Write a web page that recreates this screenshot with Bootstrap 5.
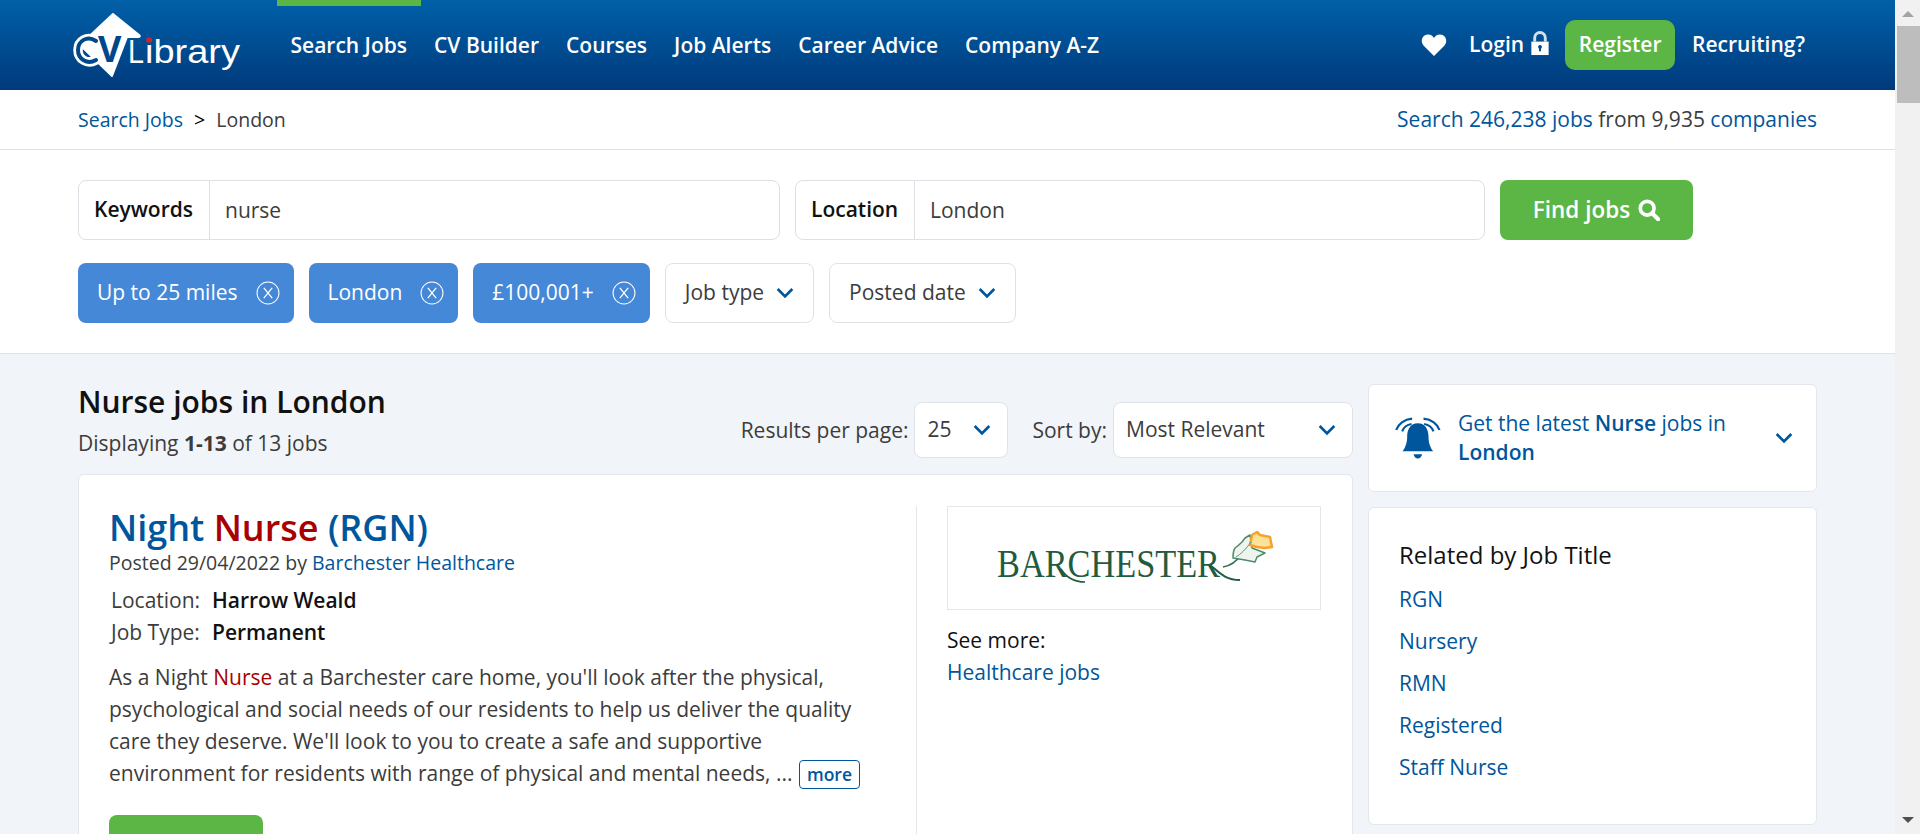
<!DOCTYPE html>
<html lang="en">
<head>
    <meta charset="UTF-8">
    <title>Nurse jobs in London</title>
    <link rel="stylesheet" href="https://cdn.jsdelivr.net/npm/bootstrap@5.3.2/dist/css/bootstrap.min.css">
    <style>
        html, body { height: 834px; overflow: hidden; }
        body { font-family: "Open Sans", sans-serif; font-size: 21px; color: #3c3c3c; background: #f1f4f8; }
        a { color: #00569c; text-decoration: none; }
        .page-wrap { width: 1895px; }
        .side-pad { padding-left: 78px; padding-right: 78px; }
        .gap-15 { gap: 15px; }

        .top-bar { height: 90px; background: linear-gradient(#0060a8, #003a7c); }
        .logo-link { width: 204px; margin-left: -5px; margin-top: 13px; }
        .top-nav a { color: #fff; font-weight: 600; font-size: 21px; padding: 0 13.5px 5px; height: 90px; display: flex; align-items: center; border-top: 6px solid transparent; }
        .top-nav a.active-item { border-top-color: #5cb646; }
        .top-right { color: #fff; font-weight: 600; font-size: 21px; padding-right: 12px; }
        .top-right a { color: #fff; }
        .heart-icon { margin-right: 22px; }
        .lock-icon { margin-left: 6px; margin-bottom: 4px; }
        .register-btn { width: 110px; height: 50px; background: #5cb646; border-radius: 10px; font-size: 21px; font-weight: 600; color: #fff; padding: 0; border: 0; margin-left: 15px; margin-right: 17px; }

        .crumb-bar { height: 60px; background: #fff; border-bottom: 1px solid #dee0e2; }
        .crumb-left { font-size: 19.500px; }
        .crumb-sep { margin: 0 6px; color: #000; }
        .search-area { height: 204px; padding-top: 30px; background: #fff; border-bottom: 1px solid #dee0e2; }
        .kw-group { width: 702px; }
        .loc-group { width: 690px; }
        .kw-group .input-group-text, .loc-group .input-group-text { background: #fff; font-weight: 600; color: #111; font-size: 21px; padding: 0 15px; border-color: #dcdfe3; border-radius: 8px 0 0 8px; }
        .kw-group .input-group-text { width: 132px; }
        .loc-group .input-group-text { width: 120px; }
        .kw-group .form-control, .loc-group .form-control { height: 60px; font-size: 21px; color: #3c3c3c; padding-left: 15px; border-color: #dcdfe3; border-radius: 0 8px 8px 0; }
        .find-btn { width: 193px; height: 60px; background: #5cb646; color: #fff; border: 0; border-radius: 8px; font-size: 22.500px; font-weight: 600; }
        .chip-row { margin-top: 23px; }
        .chip-on, .chip-off { height: 60px; border-radius: 8px; font-size: 21px; padding: 0 19px; display: flex; align-items: center; }
        .chip-on { background: #4688d8; color: #fff; border: 0; padding-right: 14px; }
        .chip-on svg { margin-left: 18px; }
        .chip-off { background: #fff; color: #3c3c3c; border: 1px solid #dfe2e6; }
        .chev-gap { margin-left: 12px; }

        .main-col { width: 1275px; }
        .side-col { width: 450px; padding-top: 30px; }
        .list-head { height: 120px; padding-top: 28px; }
        .list-title { font-size: 30px; font-weight: 600; color: #111; line-height: 40px; margin: 0; }
        .list-count { line-height: 26px; margin-top: 8px; }
        .select-row { padding-top: 20px; }
        .select-label { line-height: 56px; margin-right: 6px; }
        .plain-select { height: 56px; font-size: 21px; color: #3c3c3c; border-color: #dfe2e6; border-radius: 8px; padding: 0 12px; background-size: 18px 12px; background-position: right 16px center; background-image: url("data:image/svg+xml,%3csvg xmlns='http://www.w3.org/2000/svg' viewBox='0 0 16 10'%3e%3cpath fill='none' stroke='%2300569c' stroke-width='2.4' d='M1.5 1.5 8 8l6.500-6.500'/%3e%3c/svg%3e"); }
        .select-num { width: 94px; }
        .select-sort { width: 240px; }

        .job-panel { background: #fff; border: 1px solid #e3e6ea; border-radius: 6px; padding: 31px 31px 31px 30px; height: 500px; }
        .job-body { width: 807px; padding-right: 30px; }
        .job-title { font-size: 36px; line-height: 44px; font-weight: 600; margin: 0; color: #00569c; }
        .hit-word { color: #a80000; }
        .job-meta { line-height: 26px; font-size: 19.500px; }
        .job-facts { margin-top: 8px; line-height: 32px; }
        .job-facts span { display: inline-block; padding-left: 2px; width: 103px; }
        .job-facts b { font-weight: 600; color: #111; }
        .job-text { line-height: 32px; margin: 13px 0 0; }
        .more-tag { font-size: 17.500px; font-weight: 600; border: 1px solid #00569c; border-radius: 4px; padding: 0 7px; display: inline-block; line-height: 27px; margin-left: 1px; }
        .view-btn { display: block; width: 154px; height: 60px; margin-top: 26px; background: #5cb646; border: 0; border-radius: 8px; }
        .job-side { width: 405px; border-left: 1px solid #e3e6ea; padding-left: 30px; height: 440px; }
        .logo-box { width: 374px; height: 104px; border: 1px solid #e3e6ea; }
        .see-more { margin-top: 14px; line-height: 32px; color: #111; }

        .alert-panel { height: 108px; background: #fff; border: 1px solid #e3e6ea; border-radius: 6px; padding-left: 23px; padding-right: 23px; color: #00569c; line-height: 29px; }
        .alert-panel b { font-weight: 600; }
        .bell-icon { margin-right: 14px; }
        .related-panel { height: 318px; margin-top: 15px; background: #fff; border: 1px solid #e3e6ea; border-radius: 6px; padding: 31px 31px 31px 30px; }
        .related-title { font-size: 24px; font-weight: 400; color: #111; line-height: 32px; margin: 0 0 7px; }
        .related-panel a { display: block; line-height: 42px; }

        .fake-scroll { position: fixed; top: 0; right: 0; bottom: 0; width: 25px; background: #f1f1f1; }
        .fake-thumb { position: absolute; top: 26px; left: 2px; right: 0; height: 77px; background: #bdbdbd; }
        .arrow-up, .arrow-down { position: absolute; left: 7px; width: 0; height: 0; border-left: 6px solid transparent; border-right: 6px solid transparent; }
        .arrow-up { top: 11px; border-bottom: 6px solid #a3a3a3; }
        .arrow-down { bottom: 11px; border-top: 6px solid #505050; }
    </style>
</head>
<body>

    <div class="page-wrap">

        <header class="top-bar side-pad d-flex justify-content-between">
            <div class="d-flex">
                <a href="#" class="logo-link d-block">
                    <svg width="172" height="66" viewBox="0 0 172 66">
                        <path d="M40 1 66 22Q68 24 65 24H54L39 63 7 32Z" fill="#fff" stroke="#fff" stroke-width="2" stroke-linejoin="round"/>
                        <path d="M23 28C14 22 5 28 5 37s9 15 18 10" fill="none" stroke="#fff" stroke-width="9.500" stroke-linecap="round"/>
                        <path d="M23 28C14 22 5 28 5 37s9 15 18 10" fill="none" stroke="#00478a" stroke-width="4" stroke-linecap="round"/>
                        <text x="25" y="49" font-family="'Open Sans', sans-serif" font-weight="700" font-size="36" fill="#00478a">V</text>
                        <text x="55" y="50" font-family="'Liberation Sans', sans-serif" font-size="33" fill="#fff" textLength="16" lengthAdjust="spacingAndGlyphs">L</text>
                        <text x="72" y="50" font-family="'Liberation Sans', sans-serif" font-size="33" fill="#fff" textLength="95" lengthAdjust="spacingAndGlyphs">ibrary</text>
                        <circle cx="76" cy="27" r="2.800" fill="#d2232a"/>
                    </svg>
                </a>
                <nav class="top-nav d-flex">
                    <a href="#" class="active-item">Search Jobs</a>
                    <a href="#">CV Builder</a>
                    <a href="#">Courses</a>
                    <a href="#">Job Alerts</a>
                    <a href="#">Career Advice</a>
                    <a href="#">Company A-Z</a>
                </nav>
            </div>
            <div class="top-right d-flex align-items-center">
                <svg width="26" height="24" viewBox="0 0 26 24" class="heart-icon"><path d="M13 23 2.500 12.500C-1 8.500 1 1.500 7 1.500c3 0 5 1.800 6 3.500 1-1.700 3-3.500 6-3.500 6 0 8 7 4.500 11Z" fill="#fff"/></svg>
                <a href="#">Login</a>
                <svg width="20" height="25" viewBox="0 0 20 26" class="lock-icon"><path d="M4.500 11V7a5.500 5.500 0 0 1 11 0v4" fill="none" stroke="#d5e0ec" stroke-width="3"/><path d="M1 11h18v14H1Z" fill="#fff"/><circle cx="10" cy="16.500" r="2" fill="#00478a"/><path d="M9 17h2v4H9Z" fill="#00478a"/></svg>
                <button class="register-btn btn">Register</button>
                <a href="#">Recruiting?</a>
            </div>
        </header>

        <div class="crumb-bar side-pad d-flex justify-content-between align-items-center">
            <div class="crumb-left"><a href="#">Search Jobs</a> <span class="crumb-sep">&gt;</span> London</div>
            <div><a href="#">Search 246,238 jobs</a> from 9,935 <a href="#">companies</a></div>
        </div>

        <section class="search-area side-pad">
            <form class="d-flex gap-15">
                <div class="input-group kw-group">
                    <span class="input-group-text">Keywords</span>
                    <input type="text" class="form-control" value="nurse" aria-label="Keywords">
                </div>
                <div class="input-group loc-group">
                    <span class="input-group-text">Location</span>
                    <input type="text" class="form-control" value="London" aria-label="Location">
                </div>
                <button type="button" class="find-btn btn d-flex align-items-center justify-content-center gap-2">Find jobs
                    <svg width="22" height="22" viewBox="0 0 24 24"><circle cx="10" cy="10" r="7.500" fill="none" stroke="#fff" stroke-width="4"/><path d="m15.500 15.500 6.500 6.500" stroke="#fff" stroke-width="4.500" stroke-linecap="round"/></svg>
                </button>
            </form>
            <div class="chip-row d-flex gap-15">
                <button type="button" class="chip-on">Up to 25 miles
                    <svg width="24" height="24" viewBox="0 0 23 23"><circle cx="11.500" cy="11.500" r="10.500" fill="none" stroke="#fff"/><path d="m7.500 6.500 8 10m0-10-8 10" stroke="#fff" stroke-width="1.200"/></svg>
                </button>
                <button type="button" class="chip-on">London
                    <svg width="24" height="24" viewBox="0 0 23 23"><circle cx="11.500" cy="11.500" r="10.500" fill="none" stroke="#fff"/><path d="m7.500 6.500 8 10m0-10-8 10" stroke="#fff" stroke-width="1.200"/></svg>
                </button>
                <button type="button" class="chip-on">£100,001+
                    <svg width="24" height="24" viewBox="0 0 23 23"><circle cx="11.500" cy="11.500" r="10.500" fill="none" stroke="#fff"/><path d="m7.500 6.500 8 10m0-10-8 10" stroke="#fff" stroke-width="1.200"/></svg>
                </button>
                <button type="button" class="chip-off">Job type
                    <svg class="chev-gap" width="18" height="12" viewBox="0 0 16 10"><path d="M1.500 1.500 8 8l6.500-6.500" fill="none" stroke="#00569c" stroke-width="2.400"/></svg>
                </button>
                <button type="button" class="chip-off">Posted date
                    <svg class="chev-gap" width="18" height="12" viewBox="0 0 16 10"><path d="M1.500 1.500 8 8l6.500-6.500" fill="none" stroke="#00569c" stroke-width="2.400"/></svg>
                </button>
            </div>
        </section>

        <div class="side-pad d-flex gap-15">
            <main class="main-col">
                <div class="list-head d-flex justify-content-between">
                    <div>
                        <h1 class="list-title">Nurse jobs in London</h1>
                        <div class="list-count">Displaying <b>1-13</b> of 13 jobs</div>
                    </div>
                    <div class="select-row d-flex align-items-start">
                        <label class="select-label">Results per page:</label>
                        <select class="form-select plain-select select-num" aria-label="Results per page"><option>25</option></select>
                        <label class="ms-4 select-label">Sort by:</label>
                        <select class="form-select plain-select select-sort" aria-label="Sort by"><option>Most Relevant</option></select>
                    </div>
                </div>

                <article class="job-panel d-flex">
                    <div class="job-body">
                        <h2 class="job-title"><a href="#">Night <span class="hit-word">Nurse</span> (RGN)</a></h2>
                        <div class="job-meta">Posted 29/04/2022 by <a href="#">Barchester Healthcare</a></div>
                        <div class="job-facts">
                            <div><span>Location:</span><b>Harrow Weald</b></div>
                            <div><span>Job Type:</span><b>Permanent</b></div>
                        </div>
                        <p class="job-text">As a Night <span class="hit-word">Nurse</span> at a Barchester care home, you'll look after the physical, psychological and social needs of our residents to help us deliver the quality care they deserve. We'll look to you to create a safe and supportive environment for residents with range of physical and mental needs, ... <a href="#" class="more-tag">more</a></p>
                        <button type="button" class="view-btn btn" aria-label="View job"></button>
                    </div>
                    <div class="job-side">
                        <div class="logo-box">
                            <svg width="372" height="102" viewBox="0 0 372 102">
                                <text x="49" y="70" font-family="'Liberation Serif', serif" font-size="40" fill="#1f5c40" textLength="223" lengthAdjust="spacingAndGlyphs">BARCHESTER</text>
                                <path d="M113 62c5 8 12 13 24 13" fill="none" stroke="#1f5c40" stroke-width="1.500"/>
                                <path d="M262 58c8 6 14 15 30 15" fill="none" stroke="#1f5c40" stroke-width="2"/>
                                <path d="M275 60c8-1 14-6 20-14" fill="none" stroke="#2f6f50" stroke-width="1.500"/>
                                <path d="M285 51c0-5 0-7 2-10 3-2 5-4 7-6l3-4 5-3 2 13 13 5-8 4-2 5-10-2Z" fill="#eef5ef" stroke="#4f8a6c" stroke-width="1.500" stroke-linejoin="round"/>
                                <path d="M304 28l5-3 3 3 10 2 2 10-7 1-8-1-7-2Z" fill="#fde29a" stroke="#f5a32e" stroke-width="2.500" stroke-linejoin="round"/>
                                <path d="M288 50c5-3 10-8 15-15" fill="none" stroke="#5c9478"/>
                            </svg>
                        </div>
                        <div class="see-more">See more:<br><a href="#">Healthcare jobs</a></div>
                    </div>
                </article>
            </main>

            <aside class="side-col">
                <div class="alert-panel d-flex align-items-center justify-content-between">
                    <div class="d-flex align-items-center">
                        <svg class="bell-icon" width="52" height="45" viewBox="20 30 155 135">
                            <path d="M97 52c-22 0-32 18-32 40 0 20-6 32-14 44h92c-8-12-14-24-14-44 0-22-10-40-32-40Z" fill="#00569c"/>
                            <path d="M84 145h26c-4 17-22 17-26 0Z" fill="#00569c"/>
                            <path d="M32 72C38 54 56 40 80 38M50 76C54 66 64 56 78 54M162 72C156 54 138 40 114 38M144 76C140 66 130 56 116 54" fill="none" stroke="#00569c" stroke-width="6.500"/>
                        </svg>
                        <div>Get the latest <b>Nurse</b> jobs in<br><b>London</b></div>
                    </div>
                    <svg width="18" height="12" viewBox="0 0 16 10"><path d="M1.500 1.500 8 8l6.500-6.500" fill="none" stroke="#00569c" stroke-width="2.400"/></svg>
                </div>
                <div class="related-panel">
                    <h3 class="related-title">Related by Job Title</h3>
                    <a href="#">RGN</a>
                    <a href="#">Nursery</a>
                    <a href="#">RMN</a>
                    <a href="#">Registered</a>
                    <a href="#">Staff Nurse</a>
                </div>
            </aside>
        </div>
    </div>

    <div class="fake-scroll">
        <div class="arrow-up"></div>
        <div class="fake-thumb"></div>
        <div class="arrow-down"></div>
    </div>

</body>
</html>
